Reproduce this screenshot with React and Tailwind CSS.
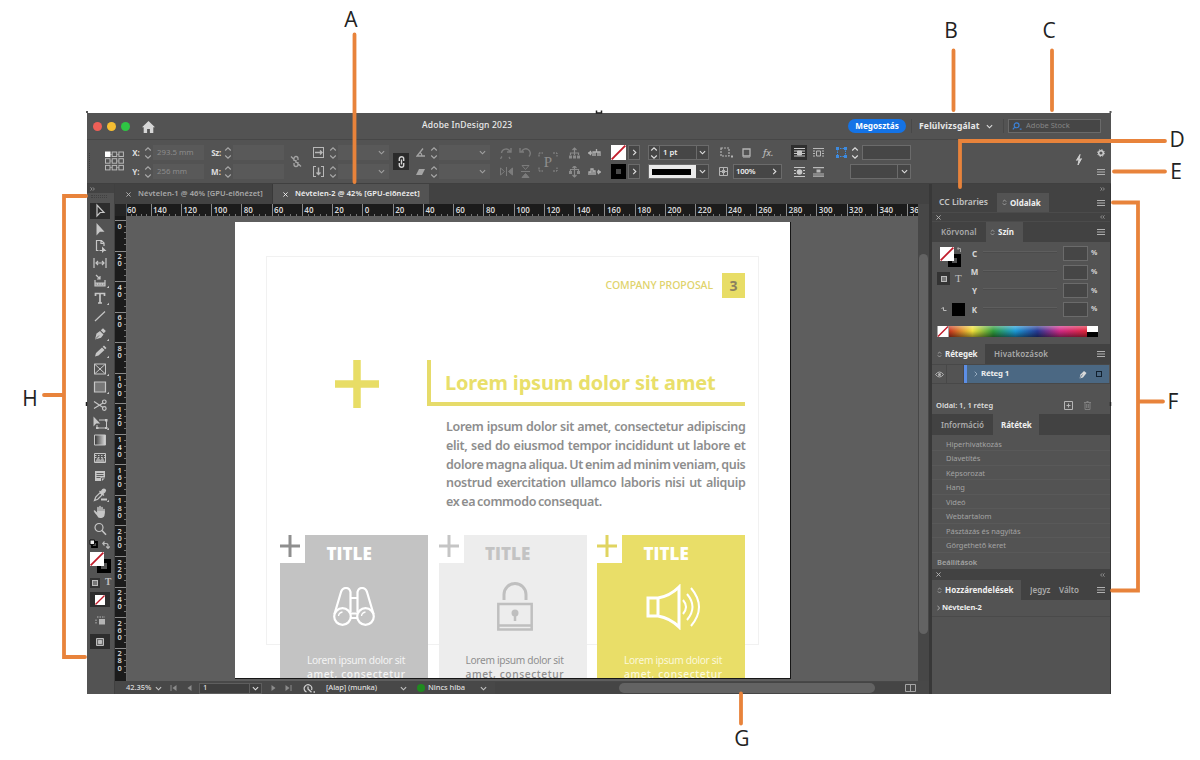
import clsx from "clsx";

const hRuler = ["140", "120", "100", "80", "60", "40", "20", "0", "20", "40", "60", "80", "100", "120", "140", "160", "180", "200", "220", "240", "260", "280", "300", "320", "340", "360"];
const vRuler = ["0", "20", "40", "60", "80", "100", "120", "140", "160", "180", "200", "220", "240", "260", "280"];
const overlays = ["Hiperhivatkozás", "Diavetítés", "Képsorozat", "Hang", "Videó", "Webtartalom", "Pásztázás és nagyítás", "Görgethető keret"];

function Svg({ className, children, box = "0 0 16 16", sw = 1.3 }) {
  return (
    <svg
      viewBox={box}
      className={clsx("shrink-0", className)}
      fill="none"
      stroke="currentColor"
      strokeWidth={sw}
    >
      {children}
    </svg>
  );
}

function Chevron({ className = "w-[7px] h-[7px] text-[#c4c4c4]" }) {
  return (
    <Svg className={className} box="0 0 8 8">
      <path d="M1 2.5l3 3 3-3" />
    </Svg>
  );
}

function ChevronRight() {
  return (
    <Svg className="w-[7px] h-[7px] text-[#dedede]" box="0 0 8 8">
      <path d="M2.5 1l3 3-3 3" />
    </Svg>
  );
}

function Spin({ className = "text-[#a8a8a8]" }) {
  return (
    <Svg className={clsx("w-[8px] h-[14px]", className)} box="0 0 8 14" sw={1.1}>
      <path d="M1.200 4.500L4 1.800l2.800 2.700M1.200 9.500L4 12.200l2.800-2.700" />
    </Svg>
  );
}

function MenuIcon({ className }) {
  return (
    <Svg className={clsx("w-[8px] h-[8px] text-[#b0b0b0]", className)} box="0 0 8 8" sw={1}>
      <path d="M0 1.500h8M0 4h8M0 6.500h8" />
    </Svg>
  );
}

function CloseIcon({ className = "text-[#b5b5b5]" }) {
  return (
    <Svg className={clsx("w-[5px] h-[5px]", className)} box="0 0 6 6" sw={1.1}>
      <path d="M.5.5l5 5M5.5.5l-5 5" />
    </Svg>
  );
}

function DoubleArrow({ left }) {
  return (
    <Svg className="w-[5px] h-[4px] text-[#a8a8a8]" box="0 0 7 6" sw={1.1}>
      {left ? <path d="M3 .5L.7 3 3 5.500M6.500.5L4.200 3l2.300 2.500" /> : <path d="M.5.5L2.800 3 .5 5.500M4 .5L6.300 3 4 5.500" />}
    </Svg>
  );
}

function NoneSwatch({ className }) {
  return (
    <Svg className={className} box="0 0 14 14" sw={1.8}>
      <rect width="14" height="14" fill="#fff" stroke="none" />
      <path d="M.6 13.400L13.400.6" stroke="#c11c2b" />
    </Svg>
  );
}

function Col({ className, children }) {
  return (
    <div className={clsx("grid shrink-0 grid-rows-[15px_15px] gap-y-[4px] items-center justify-items-center", className)}>
      {children}
    </div>
  );
}

function TitleBar() {
  return (
    <div className="flex h-[27px] shrink-0 items-center border-b border-[#474747] bg-[#535353]">
      <div className="ml-[5.500px] flex gap-[5px]">
        <span className="size-[9px] rounded-full bg-[#ee5f57]" />
        <span className="size-[9px] rounded-full bg-[#f6be32]" />
        <span className="size-[9px] rounded-full bg-[#2fc544]" />
      </div>
      <Svg className="ml-[12.500px] mt-px w-[13px] h-[12px] text-[#d6d6d6]" box="0 0 13 12">
        <path d="M6.500 0L13 6.200h-1.700V12H7.900V8H5.100v4H1.700V6.200H0z" fill="currentColor" stroke="none" />
      </Svg>
      <span className="ml-[267px] w-[93px] whitespace-nowrap pb-[3px] text-[8.500px] leading-[12px] tracking-[0.200px] font-medium text-[#ececec]">
        Adobe InDesign 2023
      </span>
      <div className="ml-auto mr-[10px] flex items-center">
        <span className="flex h-[14px] w-[58px] items-center justify-center rounded-full bg-[#1473e6] text-[8.200px] font-bold text-white">
          Megosztás
        </span>
        <span className="ml-[5px] h-[14px] w-px bg-[#484848]" />
        <span className="ml-[7px] w-[63px] whitespace-nowrap text-[8.600px] font-bold tracking-[0.150px] text-[#e8e8e8]">Felülvizsgálat</span>
        <Chevron className="ml-[4px] w-[7px] h-[7px] text-[#dcdcdc]" />
        <span className="ml-[10px] h-[14px] w-px bg-[#484848]" />
        <div className="ml-[4px] flex h-[14px] w-[93px] items-center border border-[#6a6a6a] bg-[#464646] pl-[3px] text-[7.500px] text-[#858585]">
          <Svg className="mr-[3px] w-[11px] h-[9px] text-[#3b82d8]" box="0 0 12 10" sw={1.3}>
            <circle cx="5" cy="3.700" r="2.700" />
            <path d="M3 5.700L.8 8.300M8.500 8h2" />
          </Svg>
          Adobe Stock
        </div>
      </div>
    </div>
  );
}

function Field({ className, children, chevron }) {
  return (
    <div className={clsx("flex h-[15px] w-full items-center bg-[#595959] pl-[4px] pr-[4px] text-[7.800px] text-[#8c8c8c]", className)}>
      {children}
      {chevron && <Chevron className="ml-auto w-[7px] h-[7px] text-[#a0a0a0]" />}
    </div>
  );
}

function ControlBar() {
  return (
    <div className="flex h-[44px] shrink-0 border-b border-[#404040] bg-[#535353] pt-[5px] text-[#a4a4a4]">
      <div className="mt-[8px] ml-[2px] h-[17px] w-[2px] border-l border-dotted border-[#3f3f3f]" />
      <Svg className="ml-[14px] mt-[6px] w-[19px] h-[20px] text-[#b8b8b8]" box="0 0 19 20" sw={1}>
        <path d="M3 3.500h13M3 10h13M3 16.500h13" strokeWidth=".6" />
        <rect x=".5" y="1" width="4.500" height="4.500" fill="#fff" stroke="#fff" />
        {[[7.200, 1], [13.900, 1], [0.500, 7.700], [7.200, 7.700], [13.900, 7.700], [0.500, 14.400], [7.200, 14.400], [13.900, 14.400]].map(([x, y]) => (
          <rect key={`${x}-${y}`} x={x} y={y} width="4.500" height="4.500" fill="#535353" />
        ))}
      </Svg>
      <Col className="ml-[6px] w-[12px] text-[8px] font-bold text-[#dedede]">
        <span>X:</span>
        <span>Y:</span>
      </Col>
      <Col className="w-[11px]">
        <Spin />
        <Spin />
      </Col>
      <Col className="w-[51px]">
        <Field>293.5 mm</Field>
        <Field>256 mm</Field>
      </Col>
      <Col className="ml-[5px] w-[14px] text-[8px] font-bold text-[#dedede]">
        <span className="tracking-[-0.300px]">Sz:</span>
        <span>M:</span>
      </Col>
      <Col className="w-[10px]">
        <Spin />
        <Spin />
      </Col>
      <Col className="w-[51px]">
        <Field />
        <Field />
      </Col>
      <Svg className="ml-[6px] mt-[10px] w-[12px] h-[13px]" box="0 0 12 13">
        <path d="M4 6V3.500a2 2 0 014 0V5M4 8v1.500a2 2 0 004 0V7M6 5v3M1 1.500l10 10" />
      </Svg>
      <Col className="ml-[10px] w-[12px] text-[#b8b8b8]">
        <Svg className="w-[11px] h-[11px]" box="0 0 11 11" sw={1}>
          <path d="M.5 0v11M10.500 0v11M0 .5h11M0 10.500h11" />
          <path d="M2 5.500h7M7 3.500l2 2-2 2" strokeWidth="1.400" />
        </Svg>
        <Svg className="w-[11px] h-[11px]" box="0 0 11 11" sw={1}>
          <path d="M.5 0v11M10.500 0v11M0 .5h3M8 .5h3M0 10.500h3M8 10.500h3" />
          <path d="M5.500 1.500v7M3.500 6.500l2 2 2-2" strokeWidth="1.400" />
        </Svg>
      </Col>
      <Col className="ml-[4px] w-[10px]">
        <Spin />
        <Spin />
      </Col>
      <Col className="w-[51px]">
        <Field chevron />
        <Field chevron />
      </Col>
      <div className="ml-[4px] mt-[8px] flex h-[17px] w-[16px] items-center justify-center bg-[#2b2b2b] text-[#d2d2d2]">
        <Svg className="w-[7px] h-[12px]" box="0 0 7 12" sw={1.400}>
          <path d="M1.300 5V2.800a2.200 2 0 014.400 0V5M1.300 7v2.200a2.200 2 0 004.400 0V7M3.500 3.500v5" />
        </Svg>
      </div>
      <Col className="ml-[5px] w-[12px]">
        <Svg className="w-[9px] h-[9px]" box="0 0 9 9">
          <path d="M7 .5L1 8h8M4 4.500q2 1 1.800 3.500" />
        </Svg>
        <Svg className="w-[9px] h-[6px]" box="0 0 9 6">
          <path d="M3 0h6L6 6H0z" fill="currentColor" stroke="none" />
        </Svg>
      </Col>
      <Col className="ml-[3px] w-[10px]">
        <Spin />
        <Spin />
      </Col>
      <Col className="w-[51px]">
        <Field chevron />
        <Field chevron />
      </Col>
      <Col className="ml-[9px] w-[14px] text-[#7c7c7c]">
        <Svg className="w-[12px] h-[12px]" box="0 0 12 12" sw={1.400}>
          <path d="M9 10A4.600 4.600 0 112 9.500M1.500 6A4.500 4.500 0 0110 4.500M11 1v4H7" />
        </Svg>
        <Svg className="w-[13px] h-[9px]" box="0 0 13 9" sw={1}>
          <path d="M.5 1v7L4.500 4.500zM6.500 0v9" />
          <path d="M12.500 1v7L8.500 4.500z" fill="currentColor" />
        </Svg>
      </Col>
      <Col className="ml-[5px] w-[14px] text-[#7c7c7c]">
        <Svg className="w-[12px] h-[12px]" box="0 0 12 12" sw={1.400}>
          <path d="M2.500 5A4.500 4.500 0 1110 9.500M1 1v4h4" />
        </Svg>
        <Svg className="w-[9px] h-[13px]" box="0 0 9 13" sw={1}>
          <path d="M1 .5h7L4.500 4.500zM0 6.500h9" />
          <path d="M1 12.500h7L4.500 8.500z" fill="currentColor" />
        </Svg>
      </Col>
      <div className="ml-[6px] mt-[6px] flex h-[21px] w-[20px] shrink-0 items-center text-[#8d8d8d]">
        <Svg className="-mr-[20px] w-[20px] h-[20px]" box="0 0 20 20" sw={1}>
          <path d="M1 4.500V1h4M15 1h4v3.500M1 15.500V19h4M15 19h4v-3.500" strokeDasharray="2 1" />
        </Svg>
        <span className="w-[20px] text-center font-['Liberation_Serif'] text-[15px] leading-[20px]">P</span>
      </div>
      <Col className="ml-[9px] w-[14px] text-[#8b8b8b]">
        <Svg className="w-[11px] h-[12px]" box="0 0 11 12" sw={1.200}>
          <path d="M5.500 1v5M3.500 3l2-2 2 2M1.500 8V6h8v2M5.500 6v2" />
          <path d="M0 8.500h3v3H0zM4 8.500h3v3H4zM8 8.500h3v3H8z" fill="currentColor" stroke="none" />
        </Svg>
        <Svg className="w-[11px] h-[12px]" box="0 0 11 12" sw={1.200}>
          <path d="M5.500 0v11M3.500 9l2 2 2-2M1.500 6.500V3.500h8v3M3.500 2l2-2 2 2" />
          <path d="M0 5h3v3H0zM8 5h3v3H8z" fill="currentColor" stroke="none" />
        </Svg>
      </Col>
      <Col className="ml-[6px] w-[14px] text-[#b0b0b0]">
        <Svg className="w-[13px] h-[9px]" box="0 0 13 9" sw={1.300}>
          <path d="M0 5h4M3 3L1 5l2 2M5 8V4h2v4M7 4h3v4M8.500 4V1M12 8V4h-2" />
        </Svg>
        <Svg className="w-[13px] h-[9px]" box="0 0 13 9" sw={1.300}>
          <path d="M13 5H9M10 3l2 2-2 2M1 8V5h2v3M3 5V2h2v6M7 8V4H5" />
        </Svg>
      </Col>
      <Col className="ml-[10px] w-[15px]">
        <NoneSwatch className="size-[15px]" />
        <span className="size-[15px] border-[5px] border-black bg-[#4a4a4a]" />
      </Col>
      <Col className="ml-[2px] w-[12px]">
        <span className="flex h-[15px] w-[12px] items-center justify-center border border-[#6b6b6b] bg-[#464646]"><ChevronRight /></span>
        <span className="flex h-[15px] w-[12px] items-center justify-center border border-[#6b6b6b] bg-[#464646]"><ChevronRight /></span>
      </Col>
      <Col className="ml-[8px] w-[61px]">
        <div className="flex h-[15px] w-full border border-[#6b6b6b] bg-[#464646]">
          <span className="flex w-[11px] items-center justify-center border-r border-[#6b6b6b]">
            <Spin className="text-[#dedede]" />
          </span>
          <span className="flex flex-1 items-center pl-[3px] text-[7.800px] font-semibold text-[#eeeeee]">1 pt</span>
          <span className="flex w-[12px] items-center justify-center border-l border-[#6b6b6b]">
            <Chevron className="w-[7px] h-[7px] text-[#dedede]" />
          </span>
        </div>
        <div className="flex h-[15px] w-full border border-[#6b6b6b] bg-[#464646]">
          <span className="flex flex-1 items-center bg-[#e9e9e9] px-[3px]">
            <span className="h-[6px] w-[39px] bg-black" />
          </span>
          <span className="flex w-[12px] items-center justify-center">
            <Chevron className="w-[7px] h-[7px] text-[#dedede]" />
          </span>
        </div>
      </Col>
      <Col className="ml-[8px] w-[65px] text-[#b4b4b4]">
        <div className="flex w-full items-center">
          <Svg className="ml-[3px] w-[13px] h-[11px]" box="0 0 13 11" sw={1.200}>
            <path d="M1 1h8v8H1z" strokeDasharray="2 1" />
            <path d="M11 8.500h2v2h-2z" fill="currentColor" stroke="none" />
          </Svg>
          <Svg className="ml-[9px] w-[9px] h-[10px]" box="0 0 9 10" sw={1.300}>
            <path d="M1 1h7v7H1z" />
            <path d="M1 9.500h7" stroke="#888" strokeWidth="1" />
          </Svg>
          <span className="ml-[12px] text-[9.500px] leading-[12px] font-medium italic">fx.</span>
        </div>
        <div className="flex w-full items-center">
          <Svg className="ml-[2px] w-[9px] h-[9px]" box="0 0 9 9" sw={1}>
            <path d="M.5.5h8v8h-8zM4.500 1v2M4.500 6v2M1 4.500h2M6 4.500h2" />
            <path d="M3 3h3v3H3z" fill="currentColor" stroke="none" />
          </Svg>
          <div className="ml-[5px] flex h-[15px] w-[49px] items-center border border-[#6b6b6b] bg-[#464646] pl-[2px] pr-[3px] text-[7.800px] font-semibold text-[#eeeeee]">
            <span className="flex-1 tracking-[-0.200px]">100%</span>
            <ChevronRight />
          </div>
        </div>
      </Col>
      <Col className="ml-[9px] w-[16px] text-[#c6c6c6]">
        <span className="flex h-[15px] w-[16px] items-center justify-center bg-[#2f2f2f]">
          <Svg className="w-[11px] h-[10px]" box="0 0 11 10" sw={1}>
            <path d="M0 .5h11M0 3h11M0 5.500h11M0 8h11" />
            <path d="M3.500 3h4v4h-4z" fill="currentColor" />
          </Svg>
        </span>
        <Svg className="w-[11px] h-[10px]" box="0 0 11 10" sw={1}>
          <path d="M0 .5h11M0 3.500h2M9 3.500h2M0 6.500h2M9 6.500h2M0 9.500h11" />
          <circle cx="5.500" cy="5" r="2.800" fill="currentColor" stroke="none" />
        </Svg>
      </Col>
      <Col className="ml-[4px] w-[15px] text-[#b9b9b9]">
        <Svg className="w-[11px] h-[10px]" box="0 0 11 10" sw={1}>
          <path d="M0 .5h11M0 3h2M9 3h2M0 5.500h2M9 5.500h2M0 8h2M9 8h2M3.500 3h4v5h-4z" />
        </Svg>
        <Svg className="w-[11px] h-[10px]" box="0 0 11 10" sw={1.200}>
          <path d="M0 .6h11M0 9.200h11M0 7h11" />
          <path d="M3.500 2.500h4v3h-4z" fill="currentColor" stroke="none" />
        </Svg>
      </Col>
      <Col className="ml-[8px] w-[77px]">
        <div className="flex w-full items-center">
          <Svg className="ml-[2px] mr-[4px] w-[11px] h-[11px] text-[#3d8be0]" box="0 0 11 11" sw={1}>
            <path d="M1.500 1.500h8v8h-8z" strokeDasharray="1.500 1" />
            <path d="M0 0h3v3H0zM8 0h3v3H8zM0 8h3v3H0zM8 8h3v3H8z" fill="currentColor" stroke="none" />
          </Svg>
          <Spin className="mr-[3px] text-[#dedede]" />
          <span className="h-[15px] flex-1 border border-[#6b6b6b] bg-[#464646]" />
        </div>
        <div className="flex h-[15px] w-[61px] justify-end justify-self-end border border-[#6b6b6b] bg-[#464646]">
          <span className="flex w-[13px] items-center justify-center border-l border-[#6b6b6b]">
            <Chevron className="w-[7px] h-[7px] text-[#dedede]" />
          </span>
        </div>
      </Col>
      <Svg className="ml-auto mt-[9px] w-[8px] h-[12px] text-[#d0d0d0]" box="0 0 8 12" sw={1}>
        <path d="M5 .5L1.500 6.300 4 5.500 3 11l3.500-6.300L4 5.500z" fill="currentColor" />
      </Svg>
      <Col className="ml-[13px] mr-[5px] w-[10px] text-[#cdcdcd]">
        <Svg className="w-[8px] h-[8px]" box="0 0 8 8">
          <circle cx="4" cy="4" r="2.300" strokeWidth="1.500" />
          <circle cx="4" cy="4" r="3.400" strokeWidth="1" strokeDasharray="1.300 1.370" />
        </Svg>
        <MenuIcon />
      </Col>
    </div>
  );
}

function Tool({ children, active, corner = true, className = "h-[17.700px]" }) {
  return (
    <div className={clsx("flex w-full shrink-0 items-center justify-center pr-px text-[#c6c6c6]", className)}>
      <div className={clsx("flex h-[16px] w-[20px] items-center justify-center", active && "bg-[#2d2d2d]")}>
        <Svg className="w-[20px] h-[16px]" box="0 0 20 16" sw={1.200}>
          {children}
          {corner && <path d="M19 12.800v2.200h-2.200z" fill="currentColor" stroke="none" />}
        </Svg>
      </div>
    </div>
  );
}

function ToolsPanel() {
  return (
    <div className="flex w-[28px] shrink-0 flex-col border-r border-[#404040] bg-[#535353]">
      <div className="flex h-[9px] shrink-0 items-center bg-[#434343] pl-[3px]">
        <DoubleArrow />
      </div>
      <div className="mx-[4px] mb-[3px] mt-[2px] h-[3px] w-[16px] shrink-0 border-y border-dotted border-[#414141]" />
      <div className="flex flex-col items-center pt-[1.500px]">
        <Tool active corner={false}>
          <path d="M7 2v11l3.200-3.500H14z" />
        </Tool>
        <Tool corner={false} className="h-[17px]">
          <path d="M6.500 2v12.500l3.400-3.800h4.600z" fill="currentColor" stroke="none" />
        </Tool>
        <Tool corner={false} className="h-[17px]">
          <path d="M8.500 12.500H6.500v-10h5l2.500 2.500v3M11 2.500v3h3M9.500 12.500h3" />
          <path d="M12 8.500l4.500 4.500h-2.500l-2 2z" fill="currentColor" stroke="none" />
        </Tool>
        <Tool corner={false}>
          <path d="M4 3v10M16 3v10M6 8h8M8 6L6 8l2 2M12 6l2 2-2 2" />
        </Tool>
        <Tool>
          <path d="M5 7v6h10V7M6 2l4 4M10 3v3H7M5 10h10M7.500 10v2M10 10v2M12.500 10v2" />
          <path d="M5 10h10v3H5z" fill="currentColor" stroke="none" opacity=".6" />
        </Tool>
        <Tool>
          <path d="M5.500 6V3.500h9V6M10 3.500v9.500M8 13h4" strokeWidth="1.700" />
        </Tool>
        <Tool corner={false}>
          <path d="M5 13L15 3.500" />
        </Tool>
        <Tool>
          <path d="M5 13.500l1.500-6 3.500-2.500 3.500 3.500-2.500 3.200zM10.800 4.200l2.200-2 2.800 2.800-2 2.200z" fill="currentColor" stroke="none" />
          <path d="M5 13.500l4-4" stroke="#535353" strokeWidth=".8" />
        </Tool>
        <Tool>
          <path d="M5 13.500l1-3.500 6-5.500 2.500 2.500-6 5.500zM12.700 3.800l1.300-1.300 2.500 2.500-1.300 1.300z" fill="currentColor" stroke="none" />
        </Tool>
        <Tool>
          <path d="M4.500 3h11v10h-11zM4.500 3l11 10M15.500 3l-11 10" strokeWidth="1" />
        </Tool>
        <Tool>
          <path d="M4.500 3h11v10h-11z" fill="#777" />
        </Tool>
        <Tool corner={false} className="h-[18.500px]">
          <path d="M4 4.500l9 6M4 11.500l9-5.500" />
          <circle cx="14.300" cy="4.800" r="1.800" />
          <circle cx="14.300" cy="11.500" r="1.800" />
        </Tool>
        <Tool className="h-[17.300px]">
          <path d="M3.500 1.500v10l2.700-3h4z" fill="currentColor" stroke="none" />
          <path d="M9 5h7.500v8H7v-3" strokeWidth="1" />
          <path d="M15 4h2.500v2.500H15zM15 12h2.500v2H15zM6 12h2.500v2H6z" fill="currentColor" stroke="none" />
        </Tool>
        <Tool corner={false} className="h-[17.300px]">
          <defs>
            <linearGradient id="toolGradient">
              <stop offset="0" stopColor="#333" />
              <stop offset="1" stopColor="#ddd" />
            </linearGradient>
          </defs>
          <path d="M4.500 3h11v10h-11z" fill="url(#toolGradient)" strokeWidth="1" />
        </Tool>
        <Tool corner={false} className="h-[17.500px]">
          <path d="M4.500 3.500h11v9h-11z" strokeWidth="1" />
          <path d="M5 12l3-5 2.500 3 2-3 2.500 5z" fill="currentColor" stroke="none" opacity=".7" />
          <path d="M5 5.500h10M5 7.500h10" strokeDasharray="1.500 1.500" strokeWidth="1" />
        </Tool>
        <Tool corner={false} className="h-[20px]">
          <path d="M5 3h10v7l-3 3H5z" fill="currentColor" stroke="none" />
          <path d="M6.500 5.500h7M6.500 7.500h7M6.500 9.500h4M11.500 13v-3h3.500" stroke="#535353" strokeWidth=".9" />
        </Tool>
        <Tool className="h-[17px]">
          <path d="M4.500 13.500l1.200-3.300 4.500-4.500 2 2-4.500 4.500z" />
          <path d="M9.500 4l4.500 4.500M10.500 5.500l2.300-3a1.500 1.500 0 012.200 2.200l-3 2.600z" fill="currentColor" />
          <path d="M11 12.500h6" strokeWidth="2" />
        </Tool>
        <Tool corner={false} className="h-[16.500px]">
          <path d="M6.500 9L4.500 7M8 8V3.500M10 7.500V2.500M12 7.500V3.500M14 9V5.500" strokeWidth="1.500" strokeLinecap="round" />
          <path d="M7.200 7h7.500v3q0 3.500-3.200 4h-1.500q-2 0-3-2.500L4.500 8.500q0-1 1-.7l1.700 1.500z" fill="currentColor" stroke="none" />
        </Tool>
        <Tool corner={false}>
          <circle cx="9" cy="6.500" r="4" />
          <path d="M12 9.500l4 4.300" strokeWidth="1.600" />
        </Tool>
      </div>
      <div className="flex h-[13px] shrink-0 items-center justify-between pl-[2px] pr-[4px] text-[#bcbcbc]">
        <Svg className="w-[9px] h-[9px]" box="0 0 9 9" sw={1.800}>
          <path d="M3 3h5v5H3z" stroke="#000" />
          <path d="M1 1h4.500v4.500H1z" fill="#eee" stroke="#111" strokeWidth="1" />
        </Svg>
        <Svg className="mt-[3px] w-[8px] h-[8px]" box="0 0 8 8" sw={1.200}>
          <path d="M1 2.500h3q2 0 2 2V7M2.500 0.500L.7 2.500l1.800 2M4.200 5.500L6 7.300l1.800-1.800" />
        </Svg>
      </div>
      <div className="relative ml-[3px] mt-[2px] h-[21px] w-[21px] shrink-0">
        <span className="absolute bottom-0 right-0 size-[14px] border-[4px] border-black bg-[#535353]" />
        <NoneSwatch className="absolute left-0 top-0 size-[14px]" />
      </div>
      <div className="mt-[4px] flex h-[11px] shrink-0 items-center gap-[5px] pl-[3px]">
        <span className="flex size-[10px] items-center justify-center bg-[#333]">
          <span className="size-[6px] border border-[#bbb] bg-[#777]" />
        </span>
        <span className="font-['Liberation_Serif'] text-[9.500px] font-bold leading-[11px] text-[#c0c0c0]">T</span>
      </div>
      <div className="ml-[3px] mt-[4px] flex h-[15px] w-[20px] shrink-0 items-center justify-center bg-[#2d2d2d]">
        <NoneSwatch className="h-[10px] w-[12px]" />
      </div>
      <div className="ml-[3px] mt-[6px] flex h-[14px] w-[20px] shrink-0 items-center justify-center text-[#b5b5b5]">
        <Svg className="h-[9px] w-[11px]" box="0 0 11 9" sw={1}>
          <path d="M2 1h8M1 3.500v4" strokeDasharray="1.500 1" />
          <path d="M4 3h6v5.500H4z" fill="currentColor" stroke="none" />
        </Svg>
      </div>
      <div className="ml-[3px] mt-[7px] flex h-[15px] w-[20px] shrink-0 items-center justify-center bg-[#2d2d2d] text-[#bdbdbd]">
        <Svg className="h-[8px] w-[8px]" box="0 0 8 8" sw={1}>
          <path d="M.5.5h7v7h-7z" fill="#6a6a6a" />
          <path d="M2.500 2.500h3v3h-3z" fill="currentColor" />
        </Svg>
      </div>
    </div>
  );
}

function DocTabs() {
  return (
    <div className="flex h-[20px] shrink-0 bg-[#424242] text-[7.500px] font-semibold">
      <div className="flex w-[158px] items-center border-r border-[#393939] pl-[11px] text-[#a9a9a9]">
        <CloseIcon />
        <span className="ml-[7px] tracking-[0.100px] whitespace-nowrap">Névtelen-1 @ 46% [GPU-előnézet]</span>
      </div>
      <div className="flex w-[156px] items-center bg-[#535353] pl-[10px] text-[#f0f0f0]">
        <CloseIcon className="text-[#f0f0f0]" />
        <span className="ml-[7px] tracking-[0.100px] whitespace-nowrap">Névtelen-2 @ 42% [GPU-előnézet]</span>
      </div>
    </div>
  );
}

function Ticks({ vertical }) {
  return vertical ? (
    <span className="flex h-full w-[2px] flex-col justify-evenly">
      {[1, 2, 3, 4].map((n) => <i key={n} className="h-px w-[2px] bg-[#757575]" />)}
    </span>
  ) : (
    <span className="flex h-[2px] w-full justify-evenly">
      {[1, 2, 3, 4].map((n) => <i key={n} className="h-[2px] w-px bg-[#757575]" />)}
    </span>
  );
}

function TopRuler() {
  return (
    <div className="flex h-[12px] w-[804px] shrink-0 overflow-hidden bg-[#1b1b1b] text-[8px] font-semibold leading-[11px] text-[#d8d8d8]">
      <div className="w-[12px] shrink-0 border-r border-[#555] bg-[#242424]" />
      <div className="w-[23.500px] shrink-0">
        <div className="h-[10px]">60</div>
        <Ticks />
      </div>
      {hRuler.map((n, i) => (
        <div key={i} className="w-[30.280px] shrink-0 border-l border-[#8a8a8a]">
          <div className="h-[10px] pl-[1.500px]">{n}</div>
          <Ticks />
        </div>
      ))}
    </div>
  );
}

function LeftRuler() {
  return (
    <div className="flex w-[12px] shrink-0 flex-col overflow-hidden border-r border-[#666] bg-[#1b1b1b] pt-[4px] text-[7.500px] font-semibold leading-[7.200px] text-[#d8d8d8]">
      {vRuler.map((n) => (
        <div key={n} className="flex h-[30.550px] shrink-0 border-t border-[#8a8a8a]">
          <div className="w-[9px] pl-[2.500px] pt-[1.500px]">
            <p className="w-[5px] break-all">{n}</p>
          </div>
          <Ticks vertical />
        </div>
      ))}
    </div>
  );
}

function Plus({ className, w, h, t }) {
  return (
    <Svg className={className} box={`0 0 ${w} ${h}`} sw={t}>
      <path d={`M${w / 2} 0v${h}M0 ${h / 2}h${w}`} />
    </Svg>
  );
}

function Card({ bg, plus, title, text, children }) {
  return (
    <div className={clsx("flex h-[144px] w-[148px] shrink-0 flex-col", bg)}>
      <div className="flex h-[28px] shrink-0">
        <div className="h-[28px] w-[25px] bg-white">
          <Plus className={clsx("w-[20px] h-[22px]", plus)} w={20} h={22} t={3} />
        </div>
        <div className={clsx("ml-[21.500px] pt-[9px] font-['Open_Sans'] text-[17px] font-extrabold leading-[20px]", title)}>TITLE</div>
      </div>
      <div className="flex h-[90px] shrink-0 items-center justify-center pb-[2px]">{children}</div>
      <div className={clsx("ml-[27px] w-[100px] whitespace-nowrap text-[10.200px] leading-[14.500px]", text)}>
        <p className="tracking-[-0.330px]">Lorem ipsum dolor sit</p>
        <p className="tracking-[0.600px] font-medium">amet, consectetur</p>
      </div>
    </div>
  );
}

function Artboard() {
  return (
    <div className="h-[457px] w-[556px] overflow-hidden border-r border-b border-[#161616] bg-white">
      <div className="ml-[31px] mt-[34px] h-[389px] w-[493px] border border-[#f1f1f1]">
        <div className="mt-[16px] flex items-center justify-end pr-[13px]">
          <span className="text-[10.500px] font-medium tracking-[-0.050px] text-[#e0d36c]">COMPANY PROPOSAL</span>
          <span className="ml-[9px] flex h-[25px] w-[23px] items-center justify-center bg-[#e8dd66] text-[14px] font-bold text-[#8b8160]">3</span>
        </div>
        <div className="mt-[62px] flex">
          <Plus className="ml-[68px] w-[44px] h-[48px] text-[#e8dd66]" w={44} h={48} t={7.500} />
          <div className="ml-[48px] flex h-[46px] w-[318px] items-start border-b-4 border-l-4 border-[#e6db6a] pl-[14px] pt-[9px] text-[20px] font-bold leading-[28px] tracking-[-0.170px] whitespace-nowrap text-[#e9df6b]">
            Lorem ipsum dolor sit amet
          </div>
        </div>
        <div className="ml-[179px] mt-[10px] w-[299.500px] text-[12.500px] font-semibold leading-[18.800px] tracking-[-0.300px] text-[#8d8d8d] [word-spacing:-1.200px]">
          {[
            "Lorem ipsum dolor sit amet, consectetur adipiscing",
            "elit, sed do eiusmod tempor incididunt ut labore et",
            "dolore magna aliqua. Ut enim ad minim veniam, quis",
            "nostrud exercitation ullamco laboris nisi ut aliquip",
          ].map((line) => (
            <p key={line} className="whitespace-nowrap text-justify [text-align-last:justify]">{line}</p>
          ))}
          <p>ex ea commodo consequat.</p>
        </div>
        <div className="ml-[13px] mt-[23px] flex w-[466px] gap-[10.500px]">
          <Card bg="bg-[#c3c3c3]" plus="text-[#8f8f8f]" title="text-white" text="text-[#f4f4f4]">
            <Svg className="w-[42px] h-[40px] text-white" box="0 0 42 40" sw={2.200}>
              <circle cx="9.500" cy="29.500" r="8.300" />
              <circle cx="32.500" cy="29.500" r="8.300" />
              <path d="M1.500 27L8 5q1.500-4 5-4t4.500 4v20M40.500 27L34 5q-1.500-4-5-4t-4.500 4v20M17.500 11h7M17.500 26.500h7M17.500 31h7" />
              <path d="M5.500 29q.5-3.500 4-4M28.500 29q.5-3.500 4-4" strokeWidth="1.300" />
            </Svg>
          </Card>
          <Card bg="bg-[#ededed]" plus="text-[#c5c5c5]" title="text-[#c3c3c3]" text="text-[#8f8f8f]">
            <Svg className="ml-[5px] w-[36px] h-[49px] text-[#bfbfbf]" box="0 0 36 49" sw={2.500}>
              <path d="M7 18v-5.500a11 11 0 0122 0V18" strokeWidth="3" />
              <path d="M1.300 22h33.400v25.500H1.300zM1.300 43.500h33.400" />
              <circle cx="18" cy="31" r="3.500" fill="currentColor" stroke="none" />
              <path d="M18 31v8" />
            </Svg>
          </Card>
          <Card bg="bg-[#e9de68]" plus="text-[#e0d460]" title="text-white" text="text-[#fbf8da]">
            <Svg className="ml-[5px] w-[56px] h-[46px] text-white" box="0 0 56 46" sw={3}>
              <path d="M2 14h10v18H2zM12 14Q24 12 33 3v40Q24 34 12 32" />
              <path d="M37 16q6 7 0 14M41 10q11 13 0 26M45 4q16 19 0 38" strokeWidth="2" />
            </Svg>
          </Card>
        </div>
      </div>
    </div>
  );
}

function StatusBar() {
  return (
    <div className="flex h-[13px] shrink-0 items-center bg-[#484848] pt-px text-[7.500px] font-medium text-[#dedede]">
      <div className="ml-[11px] flex w-[73px] items-center">
        <span className="tracking-[-0.050px]">42.35%</span>
        <Chevron className="ml-[4px] w-[7px] h-[7px] text-[#c4c4c4]" />
        <Svg className="ml-[8px] w-[7px] h-[6px] text-[#8b8b8b]" box="0 0 7 6" sw={1}>
          <path d="M1 0v6" />
          <path d="M6.500 0v6L2.500 3z" fill="currentColor" stroke="none" />
        </Svg>
        <Svg className="ml-[10px] w-[5px] h-[6px] text-[#8b8b8b]" box="0 0 5 6">
          <path d="M4.500 0v6L.5 3z" fill="currentColor" stroke="none" />
        </Svg>
      </div>
      <div className="flex h-[11px] w-[63px] items-center border border-[#5e5e5e] bg-[#3e3e3e] pl-[3px]">
        <span className="flex-1">1</span>
        <span className="flex h-full w-[12px] items-center justify-center border-l border-[#5e5e5e]">
          <Chevron className="w-[7px] h-[7px] text-[#dedede]" />
        </span>
      </div>
      <Svg className="ml-[9px] w-[5px] h-[6px] text-[#8b8b8b]" box="0 0 5 6">
        <path d="M.5 0v6L4.500 3z" fill="currentColor" stroke="none" />
      </Svg>
      <Svg className="ml-[9px] w-[7px] h-[6px] text-[#8b8b8b]" box="0 0 7 6" sw={1}>
        <path d="M6 0v6" />
        <path d="M.5 0v6L4.500 3z" fill="currentColor" stroke="none" />
      </Svg>
      <Svg className="ml-[11px] w-[12px] h-[9px] text-[#cfcfcf]" box="0 0 12 9" sw={1.300}>
        <path d="M3.500 8A3.800 3.800 0 118.500 6M5 2.500V5l3.500 3.300M10.500 8h1.500" />
      </Svg>
      <span className="ml-[11px] w-[74px] tracking-[-0.100px] whitespace-nowrap">[Alap] (munka)</span>
      <Chevron />
      <span className="ml-[10px] size-[8px] rounded-full bg-[#1f8a1f]" />
      <span className="ml-[3px] w-[52px] whitespace-nowrap tracking-[-0.050px]">Nincs hiba</span>
      <Chevron />
      <div className="ml-[8px] flex h-full flex-1 items-center bg-[#454545] pl-[124px]">
        <span className="h-[10px] w-[256px] rounded-full bg-[#636363]" />
      </div>
      <Svg className="mr-[13px] w-[11px] h-[8px] text-[#a5a5a5]" box="0 0 11 8" sw={1}>
        <path d="M.5.5h10v7H.5zM5.500.5v7" />
      </Svg>
    </div>
  );
}

function DocumentArea() {
  return (
    <div className="flex w-[814px] shrink-0 flex-col">
      <DocTabs />
      <div className="flex h-[477px] shrink-0">
        <div className="flex w-[803px] flex-col">
          <TopRuler />
          <div className="flex h-[465px]">
            <LeftRuler />
            <div className="flex-1 bg-[#5e5e5e] pl-[108px] pt-[6px]">
              <Artboard />
            </div>
          </div>
        </div>
        <div className="w-[11px] bg-[#474747] pl-px pt-[50px]">
          <div className="h-[380px] w-[9px] rounded-full bg-[#636363]" />
        </div>
      </div>
      <StatusBar />
    </div>
  );
}

function Strip({ className = "h-[10px]", left }) {
  return (
    <div className={clsx("flex shrink-0 items-center justify-between bg-[#424242] pl-[4px] pr-[5px]", className)}>
      {left ? <CloseIcon /> : <span />}
      <DoubleArrow left={left} />
    </div>
  );
}

function Sort() {
  return (
    <Svg className="w-[5px] h-[7px] text-[#a5a5a5]" box="0 0 5 7" sw={0.900}>
      <path d="M.8 2.700L2.500 1l1.700 1.700M.8 4.300L2.500 6l1.700-1.700" />
    </Svg>
  );
}

function PanelTabs({ className = "h-[20px]", children, menu = true }) {
  return (
    <div className={clsx("flex shrink-0 items-stretch bg-[#424242] text-[8px] font-semibold text-[#aaaaaa]", className)}>
      {children}
      {menu && <MenuIcon className="ml-auto mr-[5px] self-center" />}
    </div>
  );
}

function PanelTab({ active, sort = true, className, children }) {
  return (
    <div
      className={clsx(
        "flex items-center gap-[3px] whitespace-nowrap",
        active && "bg-[#535353] font-bold text-[#f0f0f0]",
        className
      )}
    >
      {active && sort && <Sort />}
      {children}
    </div>
  );
}

function ColorPanel() {
  return (
    <div className="flex h-[102px] shrink-0 flex-col pt-[4px]">
      <div className="flex h-[76px]">
        <div className="w-[34px] shrink-0 pl-[5px] pt-px">
          <div className="relative ml-[3px] h-[20px] w-[21px]">
            <span className="absolute bottom-0 right-0 size-[13px] border-[4px] border-black bg-[#535353]" />
            <NoneSwatch className="absolute left-0 top-0 size-[14px]" />
            <Svg className="absolute -right-[1px] top-0 w-[5px] h-[5px] text-[#aaa]" box="0 0 5 5" sw={0.900}>
              <path d="M.5 1.500H3.500V5M1.500 0L.3 1.500 1.500 3" />
            </Svg>
          </div>
          <div className="mt-[5px] flex items-center gap-[5px]">
            <span className="flex size-[13px] items-center justify-center bg-[#333]">
              <span className="size-[6px] border border-[#bbb] bg-[#777]" />
            </span>
            <span className="font-['Liberation_Serif'] text-[11px] leading-[13px] text-[#c0c0c0]">T</span>
          </div>
          <div className="mt-[18px] flex items-center gap-[5px] pl-[4px]">
            <Svg className="w-[6px] h-[6px] text-[#bbb]" box="0 0 6 6" sw={1}>
              <path d="M.5 1.500L2.500.5v3h3" />
            </Svg>
            <span className="size-[13px] bg-black" />
          </div>
        </div>
        <div className="flex flex-1 flex-col gap-[3.700px]">
          {["C", "M", "Y", "K"].map((c) => (
            <div key={c} className="flex h-[15px] items-center text-[8px] font-bold text-[#d6d6d6]">
              <span className="w-[17px] text-center">{c}</span>
              <span className="mb-[3px] h-[2px] w-[74px] border-t border-[#5e5e5e] bg-[#4c4c4c]" />
              <span className="ml-[6px] h-[15px] w-[25px] border border-[#6b6b6b] bg-[#464646]" />
              <span className="ml-[3px] text-[7px] tracking-tight">%</span>
            </div>
          ))}
        </div>
      </div>
      <div className="ml-[5px] mt-[4px] flex h-[11px] w-[161px]">
        <NoneSwatch className="h-[11px] w-[12px]" />
        <div className="flex-1 bg-[linear-gradient(to_bottom,rgba(255,255,255,0.35),transparent_45%,rgba(0,0,0,0.45)),linear-gradient(to_right,#c8321e,#f0e03a_17%,#2f9a3a_32%,#1b9ad6_48%,#273a94_64%,#cf2a86_80%,#e0263c)]" />
        <div className="h-[11px] w-[11px] border-t-[6px] border-white bg-black" />
      </div>
    </div>
  );
}

function LayersPanel() {
  return (
    <>
      <div className="flex h-[20px] shrink-0 items-center border-y border-[#484848] text-[7.800px]">
        <div className="flex h-full w-[15px] items-center justify-center border-r border-[#484848]">
          <Svg className="w-[9px] h-[7px] text-[#b5b5b5]" box="0 0 9 7" sw={1}>
            <path d="M.5 3.500Q4.500-1.500 8.500 3.500 4.500 8.500.5 3.500z" />
            <circle cx="4.500" cy="3.500" r="1.500" fill="currentColor" stroke="none" />
          </Svg>
        </div>
        <div className="flex h-full w-[17px] border-r border-[#484848]" />
        <div className="mr-px flex h-full flex-1 items-center bg-[#4b6883] text-[#eeeeee]">
          <span className="h-full w-[3px] bg-[#5c8ee6]" />
          <Svg className="ml-[7px] w-[4px] h-[6px] text-[#9fb3c6]" box="0 0 4 6" sw={0.900}>
            <path d="M.7.7L3 3 .7 5.300" />
          </Svg>
          <span className="ml-[3px] font-bold tracking-[-0.180px]">Réteg 1</span>
          <Svg className="ml-auto w-[8px] h-[9px] text-[#dadada]" box="0 0 8 9">
            <path d="M.5 8.500l1-4L5 1l2.500 2L4 7.500z" fill="currentColor" stroke="none" />
            <path d="M.5 8.500l3-4" stroke="#4b6883" strokeWidth=".8" />
          </Svg>
          <span className="ml-[9px] mr-[7px] size-[6px] border border-[#12202e]" />
        </div>
      </div>
      <div className="flex h-[30px] shrink-0 items-end pb-[2px] pl-[4px] text-[7.500px] font-semibold text-[#dedede]">
        <span className="leading-[13px] tracking-[-0.020px]">Oldal: 1, 1 réteg</span>
        <Svg className="mb-[2px] ml-auto w-[9px] h-[9px] text-[#b5b5b5]" box="0 0 9 9" sw={1}>
          <path d="M.5.5h8v8h-8zM4.500 2.500v4M2.500 4.500h4" />
        </Svg>
        <Svg className="mb-[2px] ml-[11px] mr-[19px] w-[7px] h-[9px] text-[#808080]" box="0 0 7 9" sw={1}>
          <path d="M0 1.500h7M2.500.5h2M1 2v6.500h5V2M2.700 3v4M4.300 3v4" />
        </Svg>
      </div>
    </>
  );
}

function RightPanels() {
  return (
    <div className="flex w-[182px] shrink-0 flex-col border-l-[3px] border-r border-[#383838] bg-[#535353]">
      <Strip className="h-[9px]" />
      <PanelTabs className="h-[19px]">
        <PanelTab className="w-[65px] pl-[7px] text-[8.500px] text-[#c2c2c2]">CC Libraries</PanelTab>
        <PanelTab active className="w-[52px] pl-[5px]">Oldalak</PanelTab>
      </PanelTabs>
      <Strip left className="h-[10px] border-y border-[#4b4b4b]" />
      <PanelTabs>
        <PanelTab className="w-[54px] pl-[9px] tracking-[0.080px]">Körvonal</PanelTab>
        <PanelTab active className="w-[37px] pl-[4px]">Szín</PanelTab>
      </PanelTabs>
      <ColorPanel />
      <PanelTabs className="h-[20px]">
        <PanelTab active className="w-[53px] pl-[5px] tracking-[-0.080px]">Rétegek</PanelTab>
        <PanelTab className="pl-[9px] tracking-[0.160px]">Hivatkozások</PanelTab>
      </PanelTabs>
      <LayersPanel />
      <PanelTabs className="h-[21px]" menu={false}>
        <PanelTab className="w-[61px] pl-[9px]">Információ</PanelTab>
        <PanelTab active sort={false} className="w-[46px] pl-[8px] tracking-[-0.120px]">Rátétek</PanelTab>
      </PanelTabs>
      <div className="h-[134px] shrink-0 pt-[2px] text-[7.500px] text-[#a3a3a3]">
        {overlays.map((name) => (
          <div key={name} className="h-[14.450px] border-b border-[#595959] pl-[14px] leading-[14px] tracking-[-0.050px]">{name}</div>
        ))}
        <div className="pl-[5px] pt-[3px] font-semibold leading-[13px]">Beállítások</div>
      </div>
      <Strip left className="h-[11px]" />
      <PanelTabs className="h-[20px]">
        <PanelTab active className="w-[89px] pl-[5px] tracking-[0.050px]">Hozzárendelések</PanelTab>
        <PanelTab className="ml-[9px] w-[21px] overflow-hidden">Jegyz</PanelTab>
        <PanelTab className="ml-[8px]">Válto</PanelTab>
      </PanelTabs>
      <div className="flex h-[17px] shrink-0 items-center border-b border-[#4a4a4a] pl-[5px] text-[7.500px] font-bold tracking-[-0.100px] text-[#ededed]">
        <Svg className="mr-[2px] w-[3px] h-[6px] text-[#b5b5b5]" box="0 0 3 6" sw={0.900}>
          <path d="M.5.7L2.500 3 .5 5.300" />
        </Svg>
        Névtelen-2
      </div>
    </div>
  );
}

function Callouts() {
  const labels = [
    ["A", 351, 27], ["B", 951, 38], ["C", 1049, 38], ["D", 1177, 147],
    ["E", 1176, 179], ["F", 1173, 409], ["G", 742, 746], ["H", 30, 406],
  ];
  return (
    <svg className="pointer-events-none absolute left-0 top-0" width="1200" height="760" viewBox="0 0 1200 760">
      <path
        d="M354.500 34.500V182M953.500 50.500V110M1052 50.500V110M1165 141H960V187M1114 171.500H1165M1113 202.500H1138V590.500H1112M1138 401.500H1163M741 693.500V723.500M86 196H64V657H85M64 395H44"
        fill="none"
        stroke="#e8833b"
        strokeWidth="3.800"
        strokeLinecap="round"
      />
      <path d="M596.500 110.500v2.500h5v-2.500M86.500 402v4M1110.500 402v4M86 112h2M1109.500 112h2" fill="none" stroke="#222" strokeWidth="1.500" />
      {labels.map(([t, x, y]) => (
        <text key={t} x={x} y={y} textAnchor="middle" fontSize="21" fill="#222" fontFamily="'Open Sans', sans-serif">
          {t}
        </text>
      ))}
    </svg>
  );
}

export default function App() {
  return (
    <div className="relative h-[760px] w-[1200px] overflow-hidden bg-white pl-[87px] pt-[113px] font-['Noto_Sans',sans-serif]">
      <div className="flex h-[581px] w-[1024px] flex-col overflow-hidden bg-[#535353]">
        <TitleBar />
        <ControlBar />
        <div className="flex h-[510px] shrink-0">
          <ToolsPanel />
          <DocumentArea />
          <RightPanels />
        </div>
      </div>
      <Callouts />
    </div>
  );
}
